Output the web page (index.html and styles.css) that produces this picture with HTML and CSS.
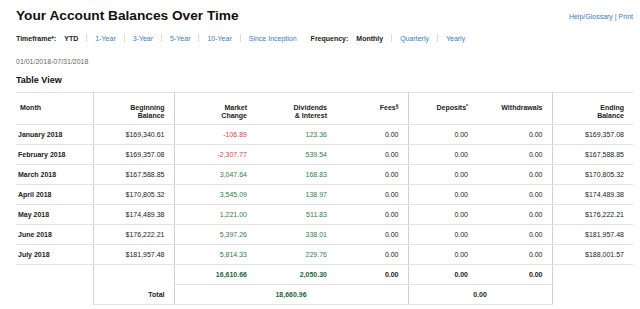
FILE: index.html
```html
<!DOCTYPE html>
<html lang="en">
<head>
  <meta charset="UTF-8" />
  <title>Account Balances Over Time</title>
  <link rel="stylesheet" href="styles.css">
</head>
<body>
  <div class="page">

    <div class="top">
      <h1>Your Account Balances Over Time</h1>
      <div class="help"><a href="#">Help/Glossary</a> | <a href="#">Print</a></div>
    </div>

    <div class="filters">
      <span class="label">Timeframe*:</span>
      <span class="current">YTD</span>
      <span class="sep"></span>
      <a href="#">1-Year</a>
      <span class="sep"></span>
      <a href="#">3-Year</a>
      <span class="sep"></span>
      <a href="#">5-Year</a>
      <span class="sep"></span>
      <a href="#">10-Year</a>
      <span class="sep"></span>
      <a href="#">Since Inception</a>
      <span class="label freq">Frequency:</span>
      <span class="current">Monthly</span>
      <span class="sep"></span>
      <a href="#">Quarterly</a>
      <span class="sep"></span>
      <a href="#">Yearly</a>
    </div>

    <div class="dates">01/01/2018-07/31/2018</div>

    <h2>Table View</h2>

    <table class="balances">
      <colgroup>
        <col style="width:77px">
        <col style="width:81px">
        <col style="width:82px">
        <col style="width:80px">
        <col style="width:72px">
        <col style="width:69px">
        <col style="width:75px">
        <col style="width:81px">
      </colgroup>
      <thead>
        <tr>
          <th class="month vline">Month</th>
          <th class="vline">Beginning<br>Balance</th>
          <th>Market<br>Change</th>
          <th>Dividends<br>&amp; Interest</th>
          <th class="vline">Fees<sup>§</sup></th>
          <th>Deposits<sup>*</sup></th>
          <th class="vline">Withdrawals</th>
          <th>Ending<br>Balance</th>
        </tr>
      </thead>
      <tbody id="rows"></tbody>
      <tfoot>
        <tr class="sums">
          <td class="vline"></td>
          <td class="vline"></td>
          <td class="line pos">16,610.66</td>
          <td class="line pos">2,050.30</td>
          <td class="line vline">0.00</td>
          <td class="line">0.00</td>
          <td class="line vline">0.00</td>
          <td></td>
        </tr>
        <tr class="grand">
          <td class="vline"></td>
          <td class="line vline">Total</td>
          <td class="line vline pos center" colspan="3">18,660.96</td>
          <td class="line vline center" colspan="2">0.00</td>
          <td></td>
        </tr>
      </tfoot>
    </table>

  </div>

  <script>
    const rows = [
      ["January 2018",  "$169,340.61", "-106.89",   "123.36", "$169,357.08"],
      ["February 2018", "$169,357.08", "-2,307.77", "539.54", "$167,588.85"],
      ["March 2018",    "$167,588.85", "3,047.64",  "168.83", "$170,805.32"],
      ["April 2018",    "$170,805.32", "3,545.09",  "138.97", "$174,489.38"],
      ["May 2018",      "$174,489.38", "1,221.00",  "511.83", "$176,222.21"],
      ["June 2018",     "$176,222.21", "5,397.26",  "338.01", "$181,957.48"],
      ["July 2018",     "$181,957.48", "5,814.33",  "229.76", "$188,001.57"]
    ];

    document.getElementById("rows").innerHTML = rows.map(r => {
      const change = r[2].startsWith("-") ? "neg" : "pos";
      return `
        <tr>
          <td class="month vline">${r[0]}</td>
          <td class="vline">${r[1]}</td>
          <td class="${change}">${r[2]}</td>
          <td class="pos">${r[3]}</td>
          <td class="vline">0.00</td>
          <td>0.00</td>
          <td class="vline">0.00</td>
          <td>${r[4]}</td>
        </tr>`;
    }).join("");
  </script>
</body>
</html>
```

FILE: styles.css
```css
/* General */
body {
  margin: 0;
  font-family: "Liberation Sans", Arial, sans-serif;
  color: #222;
  background: #fff;
}

a {
  color: #3b7bbf;
  text-decoration: none;
}

.page {
  padding: 8px 7px 0 16px;
}

/* Header */
.top {
  display: flex;
  justify-content: space-between;
  align-items: center;
  height: 16px;
}

h1 {
  margin: 0;
  font-size: 13.7px;
  line-height: 16px;
  color: #111;
}

.help {
  font-size: 7px;
  color: #3b7bbf;
  margin-top: 1px;
}

/* Filters */
.filters {
  display: flex;
  align-items: center;
  height: 12px;
  margin-top: 8px;
  font-size: 7px;
}

.filters .label {
  font-weight: bold;
  margin-right: 8px;
}

.filters .freq {
  margin-left: 14px;
  margin-right: 8px;
}

.filters .current {
  font-weight: bold;
}

.sep {
  width: 1px;
  height: 8px;
  background: #ddd;
  margin: 0 8px;
}

.dates {
  margin-top: 13px;
  font-size: 7px;
  line-height: 10px;
  color: #666;
}

h2 {
  margin: 8px 0 7px;
  font-size: 9px;
  line-height: 10px;
  color: #111;
}

/* Table */
.balances {
  width: 617px;
  table-layout: fixed;
  border-collapse: collapse;
  font-size: 7px;
}

.balances th {
  border-top: 1px solid #e4e4e4;
  border-bottom: 1px solid #e4e4e4;
  padding: 11px 9px 4px;
  line-height: 8px;
  vertical-align: top;
  text-align: right;
  font-weight: bold;
}

.balances th.month {
  text-align: left;
  padding-left: 4px;
}

.balances sup {
  font-size: 5px;
  vertical-align: top;
  line-height: 5px;
}

.balances td {
  height: 19px;
  padding: 0 9px;
  text-align: right;
  border-bottom: 1px solid #e4e4e4;
  white-space: nowrap;
}

.balances td.month {
  text-align: left;
  padding-left: 2px;
  font-weight: bold;
}

.balances .vline {
  border-right: 1px solid #d2d2d2;
}

.balances .neg {
  color: #e0394a;
}

.balances .pos {
  color: #2f7d52;
}

/* Totals */
.balances tfoot td {
  border-bottom: none;
  font-weight: bold;
}

.balances tfoot td.line {
  border-bottom: 1px solid #e4e4e4;
}

.balances tfoot .pos {
  color: #216640;
}

.balances tfoot .center {
  text-align: center;
}
```
